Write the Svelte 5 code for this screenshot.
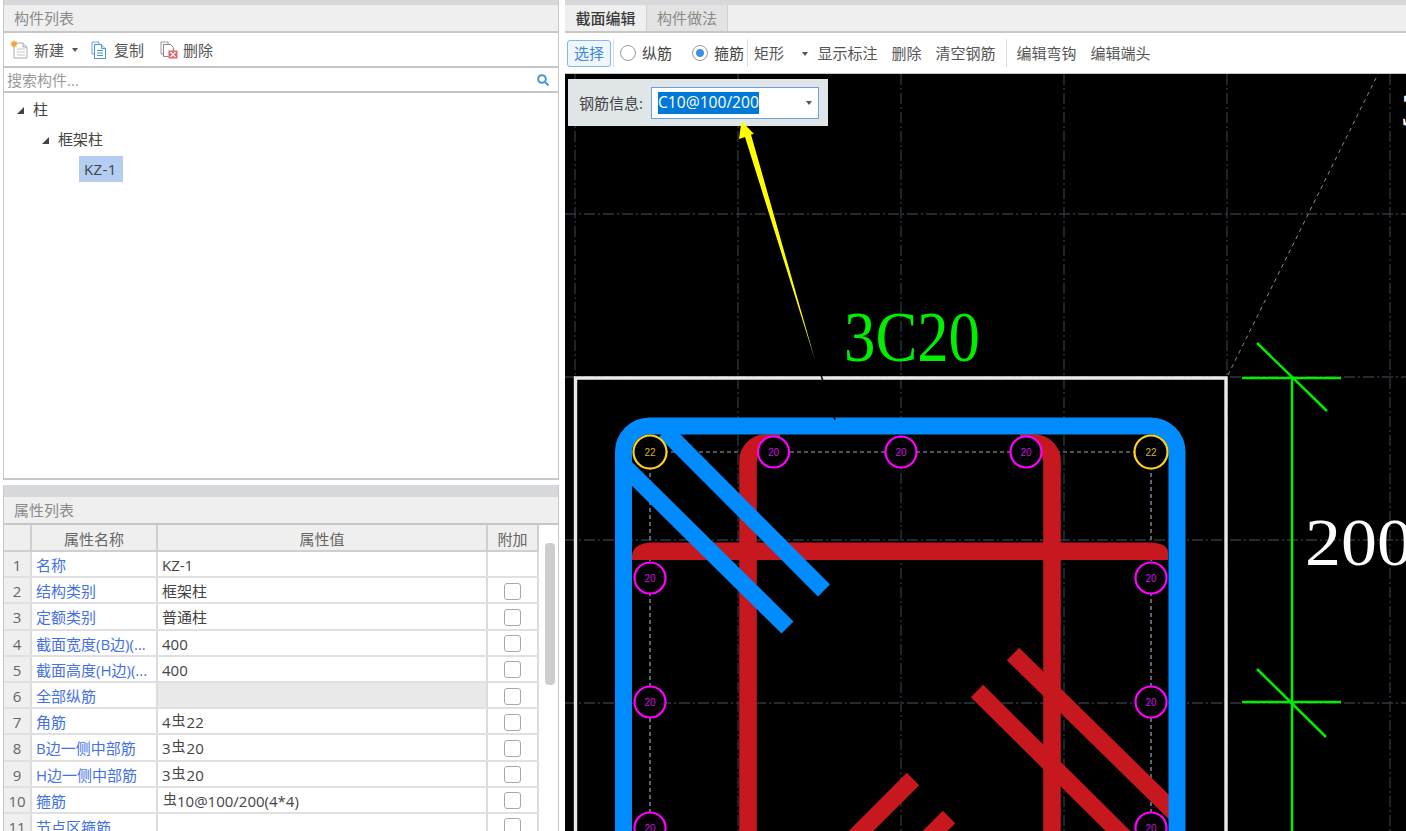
<script>
  const rows = [
    { n: 1, name: '名称', val: 'KZ-1', noCheck: true },
    { n: 2, name: '结构类别', val: '框架柱' },
    { n: 3, name: '定额类别', val: '普通柱' },
    { n: 4, name: '截面宽度(B边)(...', val: '400' },
    { n: 5, name: '截面高度(H边)(...', val: '400' },
    { n: 6, name: '全部纵筋', val: '', shaded: true },
    { n: 7, name: '角筋', pre: '4', val: '22', steel: true },
    { n: 8, name: 'B边一侧中部筋', pre: '3', val: '20', steel: true },
    { n: 9, name: 'H边一侧中部筋', pre: '3', val: '20', steel: true },
    { n: 10, name: '箍筋', pre: '', val: '10@100/200(4*4)', steel: true },
    { n: 11, name: '节点区箍筋', val: '' }
  ];
  const vGrid = [575, 738, 901, 1064, 1227, 1390];
  const hGrid = [214, 377, 540, 703];
  const bars = [
    { x: 773.5, y: 452, t: '20' }, { x: 901, y: 452, t: '20' }, { x: 1026, y: 452, t: '20' },
    { x: 650, y: 578, t: '20' }, { x: 650, y: 702, t: '20' }, { x: 650, y: 828, t: '20' },
    { x: 1151, y: 578, t: '20' }, { x: 1151, y: 702, t: '20' }, { x: 1151, y: 828, t: '20' },
    { x: 650, y: 452, t: '22', corner: true }, { x: 1151, y: 452, t: '22', corner: true }
  ];
</script>

<div class="app">
  <div class="left">
    <section class="list">
      <div class="strip"></div>
      <div class="title">构件列表</div>
      <div class="ltools">
        <span class="tool">
          <svg width="19" height="19" viewBox="0 0 19 19"><path d="M4 3h9l4 4v11H4z" fill="#fff" stroke="#a9a9a9"/><path d="M13 3v4h4" fill="#e8e8e8" stroke="#a9a9a9"/><path d="M7 9h8M7 12h8M7 15h8" stroke="#c4c4c4"/><path d="M4 0l1 2 2-1-1 2 2 1-2 1 1 2-2-1-1 2-1-2-2 1 1-2-2-1 2-1-1-2 2 1z" fill="#f2a33a"/></svg>
          新建
          <i class="caret"></i>
        </span>
        <span class="tool copy">
          <svg width="16" height="18" viewBox="0 0 16 18"><path d="M1 1h7v2" fill="none" stroke="#6ba3df"/><path d="M1 1v12h2" fill="none" stroke="#6ba3df"/><path d="M3.500 3.500h7l4 4v10h-11z" fill="#fff" stroke="#4a90dc"/><path d="M10.500 3.500v4h4" fill="#cfe3f7" stroke="#4a90dc"/><path d="M6 9.500h6M6 12h6M6 14.500h6" stroke="#4a90dc"/></svg>
          复制
        </span>
        <span class="tool del">
          <svg width="18" height="18" viewBox="0 0 18 18"><path d="M1 1h7v2M1 1v12h2" fill="none" stroke="#999"/><path d="M3.500 3.500h7l3 3v5M3.500 3.500v12h5" fill="none" stroke="#888"/><rect x="8.500" y="9.500" width="9" height="8" fill="#e0656b"/><path d="M10.500 11l5 5M15.500 11l-5 5" stroke="#fff" stroke-width="1.200"/></svg>
          删除
        </span>
      </div>
      <div class="search">
        <span>搜索构件...</span>
        <svg width="14" height="14" viewBox="0 0 14 14"><circle cx="6" cy="6" r="3.800" fill="none" stroke="#3f97dc" stroke-width="2"/><path d="M9 9l3.500 3.500" stroke="#3f97dc" stroke-width="2"/></svg>
      </div>
      <div class="tree">
        <div class="node lv0"><i class="tri"></i>柱</div>
        <div class="node lv1"><i class="tri"></i>框架柱</div>
        <div class="node lv2"><span class="picked">KZ-1</span></div>
      </div>
    </section>

    <section class="props">
      <div class="strip wide"></div>
      <div class="title">属性列表</div>
      <div class="tablewrap">
        <div class="table">
          <div class="hrow">
            <div class="cell idx"></div>
            <div class="cell">属性名称</div>
            <div class="cell">属性值</div>
            <div class="cell">附加</div>
          </div>
          {#each rows as r}
            <div class="row">
              <div class="cell idx">{r.n}</div>
              <div class="cell name">{r.name}</div>
              <div class="cell val" class:shaded={r.shaded}>
                {#if r.steel}{r.pre}<span class="steel" class:lead={!r.pre}>虫</span>{/if}{r.val}
              </div>
              <div class="cell chk">{#if !r.noCheck}<i class="box"></i>{/if}</div>
            </div>
          {/each}
        </div>
        <div class="scroll"><i class="thumb"></i></div>
      </div>
    </section>
  </div>

  <div class="right">
    <div class="strip"></div>
    <div class="tabs">
      <div class="tab on">截面编辑</div>
      <div class="tab">构件做法</div>
    </div>
    <div class="rtools">
      <span class="select-btn">选择</span>
      <i class="sep first"></i>
      <span class="radio"><i class="dot"></i>纵筋</span>
      <span class="radio sel"><i class="dot"></i>箍筋</span>
      <i class="sep"></i>
      <span class="shape">矩形</span>
      <i class="caret"></i>
      <span class="rbtn first">显示标注</span>
      <span class="rbtn">删除</span>
      <span class="rbtn">清空钢筋</span>
      <i class="sep wide"></i>
      <span class="rbtn">编辑弯钩</span>
      <span class="rbtn">编辑端头</span>
    </div>
    <div class="canvas">
      <svg class="drawing" viewBox="565 74 841 757" width="841" height="757">
        <g class="grid">
          {#each vGrid as x}<line x1={x} y1="74" x2={x} y2="831" />{/each}
          {#each hGrid as y}<line x1="565" y1={y} x2="1406" y2={y} />{/each}
        </g>
        <line x1="1228" y1="375" x2="1378" y2="74" class="ray" />
        <g class="dots">
          <line x1="650" y1="452" x2="1151" y2="452" />
          <line x1="650" y1="452" x2="650" y2="831" />
          <line x1="1151" y1="452" x2="1151" y2="831" />
        </g>
        <path d="M575.500 831V378H1226V831" class="frame" />

        <g class="red">
          <path d="M748 831V461A18 18 0 0 1 766 443H780" />
          <path d="M1052 831V461A18 18 0 0 0 1034 443H1020" />
          <path d="M1013 654L1177 815" />
          <path d="M977 691L1125 838" />
          <path d="M913 779L840 852" />
          <path d="M949 817L920 846" />
        </g>
        <path class="redfill" d="M632 560V556C632 548 640 542.500 652 542.500H1150C1160 542.500 1168 546 1168 552V560Z" />

        <g class="blue">
          <path d="M665 431L824 590.500" />
          <path d="M625 467L787.500 627.500" />
          <path d="M623.500 831V452A26 26 0 0 1 649.500 426H1151A26 26 0 0 1 1177 452V831" />
        </g>

        {#each bars as b}
          <circle cx={b.x} cy={b.y} r={b.corner ? 16.500 : 15.500} class={b.corner ? 'ring gold' : 'ring'} />
          <text x={b.x} y={b.y + 4} class={b.corner ? 'dia goldt' : 'dia'}>{b.t}</text>
        {/each}

        <g class="green">
          <line x1="1292" y1="377" x2="1292" y2="831" />
          <line x1="1242" y1="378" x2="1341" y2="378" />
          <line x1="1242" y1="702" x2="1341" y2="702" />
          <line x1="1257" y1="343" x2="1327" y2="411" />
          <line x1="1257" y1="669" x2="1326" y2="737" />
        </g>

        <text x="844" y="361" class="note3c" textLength="136" lengthAdjust="spacingAndGlyphs">3C20</text>
        <text x="1305" y="565" class="note200" textLength="108" lengthAdjust="spacingAndGlyphs">200</text>
        <text x="1401" y="126" class="note3">3</text>

        <path d="M815 360L822 378L835 420" class="tail" />
      </svg>

      <div class="popup">
        <span class="plabel">钢筋信息:</span>
        <div class="combo">
          <span class="seltext">C10@100/200</span>
          <i class="caret"></i>
        </div>
      </div>

      <svg class="pointer" viewBox="565 74 841 757" width="841" height="757">
        <path d="M741.500 121L754 134L751 134.500L815 360L745 137L739 139Z" class="arrow" />
      </svg>
    </div>
  </div>
</div>

<style>
  :global(body) {
    margin: 0;
    background: #fff;
    overflow: hidden;
  }
  .app {
    display: grid;
    grid-template-columns: 556px 841px;
    column-gap: 6px;
    width: 1406px;
    height: 831px;
    padding-left: 3px;
    box-sizing: border-box;
    overflow: hidden;
    font: 15px/1.2 "Open Sans", "Noto Sans CJK SC", sans-serif;
    color: #444;
  }
  i {
    display: block;
    font-style: normal;
  }
  .left {
    display: flex;
    flex-direction: column;
    height: 831px;
    overflow: hidden;
  }
  .list {
    height: 480px;
    display: flex;
    flex-direction: column;
    flex: none;
    box-sizing: border-box;
    border-left: 1px solid #c8c8c8;
    border-bottom: 2px solid #c8c8c8;
    border-right: 1px solid #c8c8c8;
  }
  .strip {
    height: 5px;
    background: #d6d8dc;
    flex: none;
  }
  .strip.wide {
    height: 12px;
  }
  .title {
    height: 28px;
    box-sizing: border-box;
    padding-left: 10px;
    display: flex;
    align-items: center;
    background: #efefef;
    border-bottom: 2px solid #c6c6c6;
    color: #8a8a8a;
    flex: none;
  }
  .ltools {
    height: 35px;
    box-sizing: border-box;
    border-bottom: 2px solid #c6c6c6;
    display: flex;
    align-items: center;
    padding-left: 6px;
    color: #555;
    flex: none;
  }
  .tool {
    display: flex;
    align-items: center;
    gap: 5px;
  }
  .tool.copy {
    margin-left: 13px;
    gap: 7px;
  }
  .tool.del {
    margin-left: 16px;
  }
  .caret {
    width: 0;
    height: 0;
    border: 3.500px solid transparent;
    border-top: 4px solid #555;
    border-bottom: 0;
  }
  .tool .caret {
    margin-left: 3px;
  }
  .search {
    height: 25px;
    box-sizing: border-box;
    border-bottom: 2px solid #c6c6c6;
    display: flex;
    align-items: center;
    justify-content: space-between;
    padding: 0 8px 0 3px;
    color: #9a9a9a;
    flex: none;
  }
  .tree {
    flex: 1;
    padding-top: 1px;
    color: #444;
  }
  .node {
    height: 30px;
    display: flex;
    align-items: center;
  }
  .lv0 {
    padding-left: 13px;
  }
  .lv1 {
    padding-left: 38px;
  }
  .lv2 {
    padding-left: 75px;
  }
  .tri {
    width: 0;
    height: 0;
    border-left: 7px solid transparent;
    border-bottom: 7px solid #444;
    margin-right: 9px;
    margin-top: 3px;
  }
  .picked {
    display: flex;
    align-items: center;
    height: 26px;
    padding: 0 6px 0 5px;
    background: #b3cef0;
    letter-spacing: 0.4px;
  }
  .props {
    margin-top: 5px;
    flex: 1;
    display: flex;
    flex-direction: column;
    min-height: 0;
    overflow: hidden;
    border-left: 1px solid #c8c8c8;
    border-right: 1px solid #c8c8c8;
  }
  .tablewrap {
    display: flex;
    flex: 1;
    min-height: 0;
  }
  .table {
    width: 535px;
    flex: none;
  }
  .hrow, .row {
    display: grid;
    grid-template-columns: 28px 126px 330px 51px;
  }
  .hrow {
    height: 27px;
    background: #efefef;
    border-bottom: 2px solid #cfcfcf;
    box-sizing: border-box;
    color: #666;
    text-align: center;
  }
  .row {
    height: 26.200px;
    box-sizing: border-box;
    border-bottom: 2px solid #e0e0e0;
  }
  .cell {
    border-right: 2px solid #dcdcdc;
    display: flex;
    align-items: center;
    overflow: hidden;
    white-space: nowrap;
    padding-top: 2px;
    box-sizing: border-box;
  }
  .hrow .cell {
    justify-content: center;
    border-right-color: #cfcfcf;
  }
  .idx {
    background: #efefef;
    color: #666;
    justify-content: center;
  }
  .name {
    color: #4470e6;
    padding-left: 4px;
  }
  .val {
    padding-left: 4px;
    color: #444;
    display: block;
    line-height: 22px;
  }
  .val.shaded {
    background: #e9e9e9;
  }
  .steel {
    font-size: 14px;
    line-height: 1;
    position: relative;
    top: -3px;
    display: inline-block;
    margin: 0 1px;
  }
  .steel.lead {
    margin-left: 1px;
    margin-right: 0;
  }
  .chk {
    justify-content: center;
  }
  .box {
    width: 15px;
    height: 15px;
    border: 1px solid #a8a8a8;
    border-radius: 3px;
  }
  .scroll {
    flex: 1;
    padding: 18px 0 0 6px;
  }
  .thumb {
    width: 10px;
    height: 142px;
    background: #cdcdcd;
    border-radius: 4px;
  }
  .right {
    display: flex;
    flex-direction: column;
    height: 831px;
    overflow: hidden;
  }
  .tabs {
    height: 28px;
    box-sizing: border-box;
    display: flex;
    background: #efefef;
    border-bottom: 2px solid #c6c6c6;
    flex: none;
  }
  .tab {
    width: 81px;
    display: flex;
    align-items: center;
    justify-content: center;
    background: #e3e3e3;
    color: #8a8a8a;
    border-right: 1px solid #d0d0d0;
    box-sizing: border-box;
  }
  .tab.on {
    width: 82px;
    background: #efefef;
    color: #3a3a3a;
    font-weight: 500;
  }
  .rtools {
    height: 41px;
    box-sizing: border-box;
    display: flex;
    align-items: center;
    padding-left: 2px;
    border-bottom: 1px solid #c6c6c6;
    color: #555;
    flex: none;
  }
  .select-btn {
    width: 44px;
    height: 27px;
    box-sizing: border-box;
    display: flex;
    align-items: center;
    justify-content: center;
    color: #3f86d8;
    background: #eef6fe;
    border: 1px solid #7db8f0;
    border-radius: 3px;
  }
  .sep {
    width: 1px;
    height: 28px;
    background: #dcdcdc;
    margin: 0 3px;
  }
  .sep.first {
    margin-left: 2px;
  }
  .sep.wide {
    margin: 0 10px 0 -4px;
  }
  .radio {
    display: flex;
    align-items: center;
    gap: 6px;
    margin-right: 17px;
    color: #444;
  }
  .radio.sel {
    margin-right: 0;
  }
  .dot {
    width: 16px;
    height: 16px;
    box-sizing: border-box;
    border: 1px solid #999;
    border-radius: 50%;
    background: #fff;
    margin-left: 3px;
  }
  .sel .dot {
    background: radial-gradient(circle, #3c8fe8 0 3.500px, #fff 4.500px);
  }
  .shape {
    width: 47px;
    padding-left: 3px;
    box-sizing: border-box;
  }
  .rtools .caret {
    margin: 2px 0 0 3.500px;
  }
  .rbtn {
    margin-right: 14px;
  }
  .rbtn.first {
    margin-left: 10px;
  }
  .canvas {
    position: relative;
    flex: 1;
    background: #000;
    overflow: hidden;
  }
  .drawing {
    display: block;
  }
  .pointer {
    position: absolute;
    left: 0;
    top: 0;
    pointer-events: none;
  }
  .grid line {
    stroke: #2f3742;
    stroke-width: 1.300;
    stroke-dasharray: 11 3 2 3;
  }
  .ray {
    stroke: #8a8a8a;
    stroke-width: 1;
    stroke-dasharray: 4 4;
  }
  .dots line {
    stroke: #94a8bc;
    stroke-width: 1.200;
    stroke-dasharray: 4 3;
  }
  .frame {
    fill: none;
    stroke: #eaeaea;
    stroke-width: 3.400;
  }
  .red path {
    fill: none;
    stroke: #c7181f;
    stroke-width: 17.500;
  }
  .redfill {
    fill: #c7181f;
  }
  .blue path {
    fill: none;
    stroke: #008cff;
    stroke-width: 17;
  }
  .ring {
    fill: #000;
    stroke: #ff00ff;
    stroke-width: 2.200;
  }
  .ring.gold {
    stroke: #ffd21a;
  }
  .dia {
    fill: #d010e0;
    font: 10px "Liberation Sans", sans-serif;
    text-anchor: middle;
  }
  .goldt {
    fill: #d8b820;
  }
  .green line {
    stroke: #00ee00;
    stroke-width: 2.500;
  }
  .note3c {
    fill: #00ee00;
    font: 72px "Liberation Serif", serif;
  }
  .note200 {
    fill: #fff;
    font: 68px "Liberation Serif", serif;
  }
  .note3 {
    fill: #fff;
    font: 46px "Liberation Serif", serif;
  }
  .tail {
    fill: none;
    stroke: #000;
    stroke-width: 1.500;
  }
  .arrow {
    fill: #ffff00;
  }
  .popup {
    position: absolute;
    left: 3px;
    top: 5px;
    width: 260px;
    height: 47px;
    box-sizing: border-box;
    background: #e0e6e8;
    display: flex;
    align-items: center;
    padding-left: 11px;
    color: #444;
  }
  .plabel {
    width: 72px;
    flex: none;
  }
  .combo {
    width: 168px;
    height: 32px;
    box-sizing: border-box;
    background: #fff;
    border: 1px solid #6c9fe0;
    display: flex;
    align-items: center;
    justify-content: space-between;
    padding: 0 6px;
  }
  .seltext {
    height: 22px;
    display: flex;
    align-items: center;
    background: #0078d7;
    color: #fff;
    font-size: 15.600px;
    white-space: nowrap;
  }
</style>
